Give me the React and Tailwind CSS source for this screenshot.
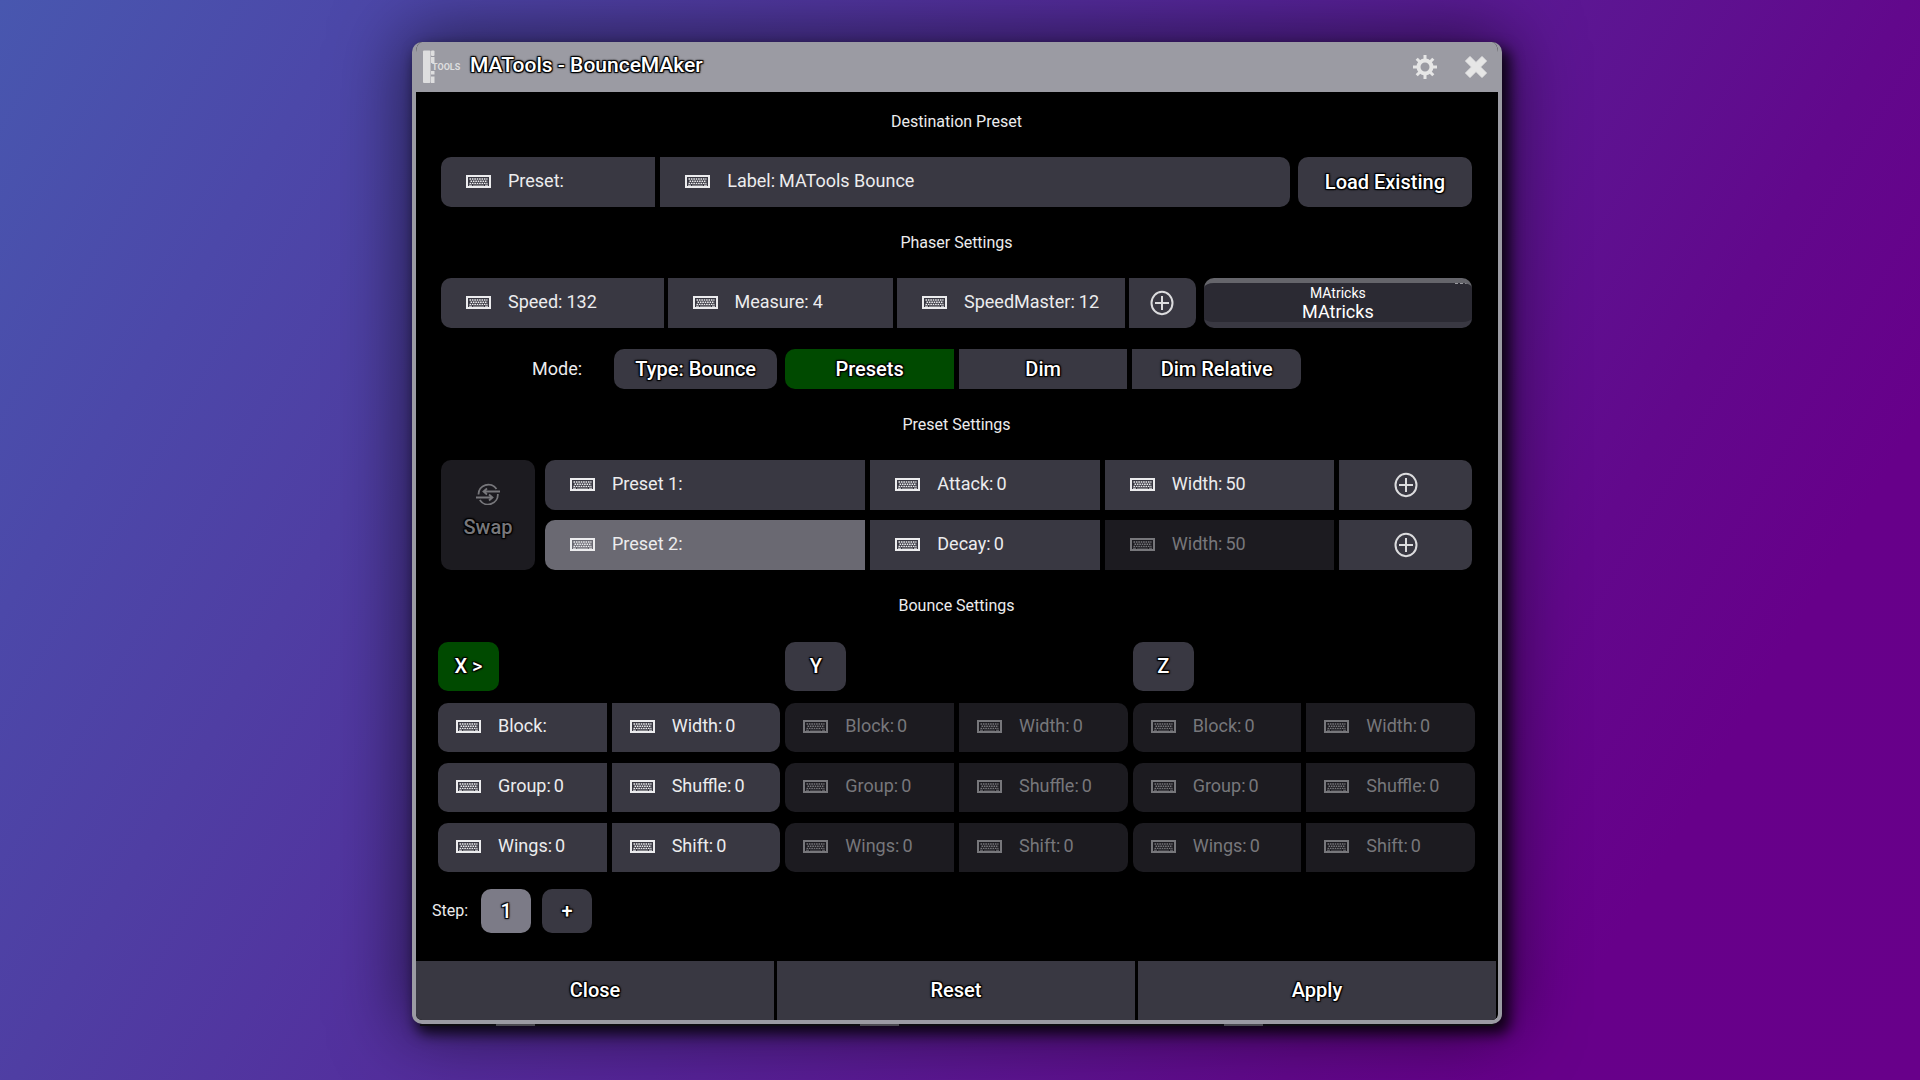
import React, { useState } from 'react';

const CELL = 'bg-[#393842] text-[#ececee]';
const CELL_OFF = 'bg-[#1c1b20] text-[#77777b]';
const OUTLINE =
  '[text-shadow:1px_1px_1px_#000,-1px_-1px_1px_#000,1px_-1px_1px_#000,-1px_1px_1px_#000,0_0_3px_#000]';

const KeyboardIcon = () => (
  <svg viewBox="0 0 25 13" className="h-[13px] w-[25px] shrink-0" fill="none" stroke="currentColor" aria-hidden="true">
    <rect x="1" y="1" width="23" height="11" strokeWidth="2" />
    <path d="M3.5 4h18M4.5 6.2h17M3.5 8.4h18" strokeWidth="1.4" strokeDasharray="1.6 0.8" />
    <path d="M3 10.2h3M19 10.2h3" strokeWidth="1" />
    <path d="M7 10.2h11" strokeWidth="1" opacity="0.6" />
  </svg>
);

const PlusCircle = () => (
  <svg viewBox="0 0 24 26" className="h-[26px] w-6" fill="none" stroke="#dcdcde" strokeWidth="2" aria-hidden="true">
    <ellipse cx="12" cy="13" rx="10.500" ry="11.200" />
    <path d="M12 6v14M5 13h14" />
  </svg>
);

const SwapIcon = () => (
  <svg viewBox="0 0 26 22" className="h-[22px] w-[26px]" fill="none" stroke="currentColor" strokeWidth="1.8" aria-hidden="true">
    <path d="M3.500 11.500A9.800 9.700 0 0 1 21.500 6M22.800 11A9.800 9.700 0 0 1 4.800 17" />
    <path d="M25 8.500H9M12 5.500L8.500 8.500 12 11.500M1 14.500h16M14 11.500l3.500 3L14 17.500" />
  </svg>
);

const GearIcon = () => (
  <svg viewBox="0 0 26 26" className="size-[26px]" fill="none" stroke="#e6e6e6" aria-hidden="true">
    <circle cx="13" cy="13" r="6.500" strokeWidth="4" />
    <path
      d="M13 1v5M13 20v5M1 13h5M20 13h5M4.700 4.700l3.300 3.300M18 18l3.300 3.300M4.700 21.300L8 18M18 8l3.300-3.300"
      strokeWidth="3"
    />
  </svg>
);

const CloseIcon = () => (
  <svg viewBox="0 0 24 24" className="size-6" aria-hidden="true">
    <path
      d="M6 1.500L12 7.500 18 1.500 22.500 6 16.500 12 22.500 18 18 22.500 12 16.500 6 22.500 1.500 18 7.500 12 1.500 6z"
      fill="#e6e6e6"
      stroke="#e6e6e6"
      strokeWidth="1"
      strokeLinejoin="round"
    />
  </svg>
);

const Logo = () => (
  <svg viewBox="0 0 40 34" className="h-[34px] w-10" fill="#dededf" aria-hidden="true">
    <rect x="1" y="0.500" width="7.500" height="32.500" rx="1" />
    <rect x="9" y="0.500" width="3.500" height="5.500" rx="1" />
    <rect x="9" y="7" width="3.500" height="6" />
    <rect x="9" y="21" width="3.500" height="3.500" />
    <rect x="9" y="26.500" width="3.500" height="6.500" />
    <text x="10" y="20" fontSize="9" fontWeight="700">
      TOOLS
    </text>
  </svg>
);

function Field({ label, value = '', disabled, tight, className = '', size = 'h-[50px] pb-0.5 pl-[25px]', tone }) {
  const [text, setText] = useState(value);
  return (
    <label
      className={`flex min-w-0 items-center overflow-hidden text-lg ${size} ${tone || (disabled ? CELL_OFF : CELL)} ${className}`}
    >
      <KeyboardIcon />
      <span className="ml-[17px] shrink-0">{label}:</span>
      <input
        type="text"
        value={text}
        disabled={disabled}
        onChange={(e) => setText(e.target.value)}
        className={`w-0 min-w-0 flex-1 bg-transparent outline-none ${tight ? 'ml-[3px]' : 'ml-1'}`}
      />
    </label>
  );
}

function Button({ children, className = '', tone = 'bg-[#393842] text-white', ...rest }) {
  return (
    <button type="button" className={`flex items-center justify-center text-xl font-medium ${OUTLINE} ${tone} ${className}`} {...rest}>
      {children}
    </button>
  );
}

const Heading = ({ children }) => (
  <h2 className="flex h-[71px] items-center justify-center text-base text-[#ececee]">{children}</h2>
);

const AXIS_ROWS = [
  ['Block', 'Width'],
  ['Group', 'Shuffle'],
  ['Wings', 'Shift'],
];

const AXIS_FIELD = 'h-[49px] pb-[3px] pl-[18px]';

function Axis({ name, active }) {
  return (
    <div>
      <Button className="h-[49px] w-[61px] rounded-[10px] pb-0.5" tone={active ? 'bg-[#004a00] text-white' : undefined}>
        {name}
      </Button>
      <div className="mt-3 grid gap-[11px]">
        {AXIS_ROWS.map(([left, right]) => (
          <div key={left} className="grid grid-cols-2 gap-[5px]">
            <Field
              label={left}
              value={active && left === 'Block' ? '' : '0'}
              disabled={!active}
              tight
              size={AXIS_FIELD}
              className="rounded-l-[10px]"
            />
            <Field label={right} value="0" disabled={!active} tight size={AXIS_FIELD} className="rounded-r-[10px]" />
          </div>
        ))}
      </div>
    </div>
  );
}

const MODES = ['Presets', 'Dim', 'Dim Relative'];

export default function App() {
  const [mode, setMode] = useState('Presets');

  return (
    <main className="min-h-screen bg-linear-[120deg,#4857af_0%,#4c48a9_14%,#4f3ea3_25%,#562499_50%,#62088c_75%,#67008a_85%,#68008a_100%] pt-[42px] pr-1.5 font-[Roboto,sans-serif]">
      <div className="mx-auto w-full max-w-[1090px]">
        <section className="overflow-hidden rounded-[10px] border-4 border-t-0 border-[#9b9ba3] bg-black shadow-[6px_8px_14px_2px_rgba(0,0,0,0.8),0_0_70px_8px_rgba(0,0,0,0.55)]">
          <header className="flex h-[50px] items-center bg-[#9b9ba3] pr-2.5 pl-1.5">
            <Logo />
            <h1 className={`ml-2 pb-0.5 text-[21px] font-medium text-white ${OUTLINE}`}>MATools - BounceMAker</h1>
            <button type="button" aria-label="Settings" className="mr-[26px] ml-auto">
              <GearIcon />
            </button>
            <button type="button" aria-label="Close window">
              <CloseIcon />
            </button>
          </header>

          <div className="pr-[26px] pb-px pl-[25px]">
            <h2 className="flex h-[65px] items-center justify-center pb-1.5 text-base text-[#ececee]">Destination Preset</h2>
            <div className="grid grid-cols-[848fr_174fr] gap-2">
              <div className="grid grid-cols-[214fr_629fr] gap-[5px]">
                <Field label="Preset" className="rounded-l-[10px]" />
                <Field label="Label" value="MATools Bounce" className="rounded-r-[10px]" />
              </div>
              <Button className="rounded-[10px]">Load Existing</Button>
            </div>

            <Heading>Phaser Settings</Heading>
            <div className="grid grid-cols-[754fr_268fr] gap-2">
              <div className="grid grid-cols-[222fr_225fr_227fr_67fr] gap-1">
                <Field label="Speed" value="132" className="rounded-l-[10px]" />
                <Field label="Measure" value="4" />
                <Field label="SpeedMaster" value="12" />
                <Button className="rounded-r-[10px]" aria-label="Add speed">
                  <PlusCircle />
                </Button>
              </div>
              <button
                type="button"
                className="relative flex flex-col items-center justify-center overflow-hidden rounded-[10px] border-t-5 border-b-6 border-t-[#65656b] border-b-[#393842] bg-[#2b2a33] text-white"
              >
                <span className="text-sm leading-[18px]">MAtricks</span>
                <span className="text-lg leading-5">MAtricks</span>
                <span className="absolute -top-px right-1 flex gap-0.5" aria-hidden="true">
                  <i className="h-0.5 w-[3px] bg-[#9a9a9f]" />
                  <i className="h-0.5 w-[3px] bg-[#9a9a9f]" />
                  <i className="h-0.5 w-[3px] bg-[#9a9a9f]" />
                </span>
              </button>
            </div>

            <div className="mt-[21px] flex h-10 gap-2 pr-[171px] pl-[91px]">
              <span className="mr-6 flex items-center text-lg text-[#ececee]">Mode:</span>
              <Button className="flex-[163] rounded-[10px]">Type: Bounce</Button>
              <div className="grid flex-[515] grid-cols-3 gap-[5px] overflow-hidden rounded-[10px]">
                {MODES.map((m) => (
                  <Button
                    key={m}
                    aria-pressed={mode === m}
                    onClick={() => setMode(m)}
                    tone={mode === m ? 'bg-[#004a00] text-white' : undefined}
                  >
                    {m}
                  </Button>
                ))}
              </div>
            </div>

            <Heading>Preset Settings</Heading>
            <div className="grid grid-cols-[94fr_927fr] gap-2.5">
              <Button disabled className="flex-col gap-2 rounded-[10px] pb-1.5" tone="bg-[#1c1b20] text-[#77777b]">
                <SwapIcon />
                Swap
              </Button>
              <div className="grid grid-cols-[321fr_230fr_230fr_133fr] gap-x-[5px] gap-y-2.5">
                <Field label="Preset 1" className="rounded-l-[10px]" />
                <Field label="Attack" value="0" tight />
                <Field label="Width" value="50" tight />
                <Button className="rounded-r-[10px]" aria-label="Add to preset 1">
                  <PlusCircle />
                </Button>
                <Field label="Preset 2" className="rounded-l-[10px]" tone="bg-[#6a6972] text-[#ececee]" />
                <Field label="Decay" value="0" tight />
                <Field label="Width" value="50" tight disabled />
                <Button className="rounded-r-[10px]" aria-label="Add to preset 2">
                  <PlusCircle />
                </Button>
              </div>
            </div>

            <Heading>Bounce Settings</Heading>
          </div>

          <div className="grid grid-cols-3 gap-[5px] pr-[23px] pl-[22px]">
            <Axis name="X >" active />
            <Axis name="Y" />
            <Axis name="Z" />
          </div>

          <div className="mt-[17px] flex h-11 items-center gap-[11px] pl-4">
            <span className="mr-0.5 text-base text-[#ececee]">Step:</span>
            <Button className="h-full w-[50px] rounded-[10px]" tone="bg-[#7c7b87] text-white">1</Button>
            <Button className="h-full w-[50px] rounded-[10px]">+</Button>
          </div>

          <footer className="mt-7 grid grid-cols-3 gap-[3px] pr-0.5">
            <Button className="h-[59px] pb-0.5">Close</Button>
            <Button className="h-[59px] pb-0.5">Reset</Button>
            <Button className="h-[59px] pb-0.5">Apply</Button>
          </footer>
        </section>
        {/* edge of the window stacked behind */}
        <div className="mx-2 grid h-0.5 grid-cols-3 bg-[#0e0d12]" aria-hidden="true">
          <i className="ml-[76px] w-[39px] bg-[#4a4a50]" />
          <i className="ml-[82px] w-[39px] bg-[#4a4a50]" />
          <i className="ml-[88px] w-[39px] bg-[#4a4a50]" />
        </div>
      </div>
    </main>
  );
}
